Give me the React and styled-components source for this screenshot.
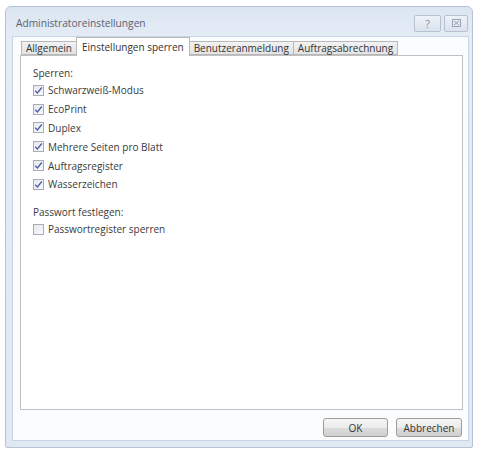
import React from "react";
import styled, { createGlobalStyle } from "styled-components";

const GlobalStyle = createGlobalStyle`
  html, body {
    margin: 0;
    padding: 0;
    background: #ffffff;
  }
  body {
    font-family: "Open Sans", "Noto Sans", "DejaVu Sans", sans-serif;
  }
`;

const Window = styled.div`
  box-sizing: border-box;
  margin: 6px 0 0 5px;
  width: 468px;
  height: 442px;
  border: 1px solid #b5c3d5;
  border-radius: 6px 6px 2px 2px;
  background: linear-gradient(180deg, #dbe5f1 0px, #e4ecf6 30px, #dfe8f3 100%);
  display: flex;
  flex-direction: column;
  padding: 0 3px 6px 6px;
`;

const TitleBar = styled.div`
  height: 29px;
  display: flex;
  align-items: center;
  justify-content: space-between;
  padding: 0 1px 0 4px;
`;

const Title = styled.span`
  font-size: 10.2px;
  color: #5a6270;
  margin-top: 3px;
`;

const CaptionButtons = styled.div`
  display: flex;
  gap: 3px;
  margin-top: 3px;
`;

const CaptionButton = styled.div`
  box-sizing: border-box;
  width: ${({ w }) => w}px;
  height: 17px;
  border: 1px solid #b6c2d2;
  border-radius: 2px;
  background: linear-gradient(180deg, #eef3f9, #d9e2ee);
  display: flex;
  align-items: center;
  justify-content: center;
  color: #8a94a4;
  font-size: 11px;
`;

const Client = styled.div`
  flex: 1;
  background: #fbfcfd;
  border: 1px solid #c9d5e4;
  display: flex;
  flex-direction: column;
  padding: 0 6px 0 7px;
`;

const TabStrip = styled.div`
  display: flex;
  align-items: flex-end;
  height: 18px;
  padding-left: 2px;
`;

const Tab = styled.div`
  box-sizing: border-box;
  height: ${({ active }) => (active ? 19 : 14)}px;
  margin-bottom: ${({ active }) => (active ? -1 : 0)}px;
  padding: 0 ${({ active }) => (active ? 5 : 4)}px;
  border: 1px solid #b8b8b8;
  border-bottom: ${({ active }) => (active ? "none" : "1px solid #b8b8b8")};
  margin-left: -1px;
  background: ${({ active }) =>
    active ? "#ffffff" : "linear-gradient(180deg, #f2f2f2, #e3e3e3)"};
  font-size: 10px;
  color: #333;
  display: flex;
  align-items: center;
  white-space: nowrap;
  position: relative;
  z-index: ${({ active }) => (active ? 1 : 0)};
`;

const Panel = styled.div`
  box-sizing: border-box;
  width: 443px;
  height: 355px;
  background: #ffffff;
  border: 1px solid #c0c0c0;
  padding: 9px 0 0 12px;
  display: flex;
  flex-direction: column;
`;

const GroupLabel = styled.div`
  font-size: 10px;
  color: #3a3a3a;
  height: 16px;
  line-height: 16px;
  margin-top: ${({ gap }) => gap || 0}px;
`;

const Row = styled.label`
  display: flex;
  align-items: center;
  gap: 4px;
  height: 18.8px;
  font-size: 10px;
  color: #3a3a3a;
`;

const Box = styled.span`
  box-sizing: border-box;
  width: 11px;
  height: 11px;
  border: 1px solid #a7acb6;
  background: linear-gradient(135deg, #e6e9ef, #f8f9fb);
  display: flex;
  align-items: center;
  justify-content: center;
`;

const Footer = styled.div`
  flex: 1;
  display: flex;
  justify-content: flex-end;
  align-items: center;
  gap: 8px;
  padding-top: 5px;
`;

const Button = styled.div`
  box-sizing: border-box;
  width: ${({ w }) => w}px;
  height: 19px;
  border: 1px solid #9c9c9c;
  border-radius: 3px;
  background: linear-gradient(180deg, #f6f6f6 0%, #ebebeb 50%, #dddddd 51%, #cfcfcf 100%);
  font-size: 10px;
  color: #333;
  display: flex;
  align-items: center;
  justify-content: center;
`;

const Check = ({ checked }) => (
  <Box>
    {checked && (
      <svg width="9" height="9" viewBox="0 0 9 9">
        <path d="M1.2 4.8 L3.4 7 L7.8 1.5" fill="none" stroke="#4d5fa6" strokeWidth="1.3" />
      </svg>
    )}
  </Box>
);

const locks = [
  "Schwarzweiß-Modus",
  "EcoPrint",
  "Duplex",
  "Mehrere Seiten pro Blatt",
  "Auftragsregister",
  "Wasserzeichen",
];

const tabs = ["Allgemein", "Einstellungen sperren", "Benutzeranmeldung", "Auftragsabrechnung"];

export default function App() {
  return (
    <>
      <GlobalStyle />
      <Window>
        <TitleBar>
          <Title>Administratoreinstellungen</Title>
          <CaptionButtons>
            <CaptionButton w={27}>?</CaptionButton>
            <CaptionButton w={24}>
              <svg width="9" height="8" viewBox="0 0 9 8">
                <rect x="0.5" y="0.5" width="8" height="7" fill="none" stroke="#9aa3b2" />
                <path d="M2 2 L7 6 M7 2 L2 6" stroke="#9aa3b2" />
              </svg>
            </CaptionButton>
          </CaptionButtons>
        </TitleBar>
        <Client>
          <TabStrip>
            {tabs.map((t, i) => (
              <Tab key={t} active={i === 1}>
                {t}
              </Tab>
            ))}
          </TabStrip>
          <Panel>
            <GroupLabel>Sperren:</GroupLabel>
            {locks.map((l) => (
              <Row key={l}>
                <Check checked />
                {l}
              </Row>
            ))}
            <GroupLabel gap={10}>Passwort festlegen:</GroupLabel>
            <Row>
              <Check />
              Passwortregister sperren
            </Row>
          </Panel>
          <Footer>
            <Button w={65}>OK</Button>
            <Button w={66}>Abbrechen</Button>
          </Footer>
        </Client>
      </Window>
    </>
  );
}
